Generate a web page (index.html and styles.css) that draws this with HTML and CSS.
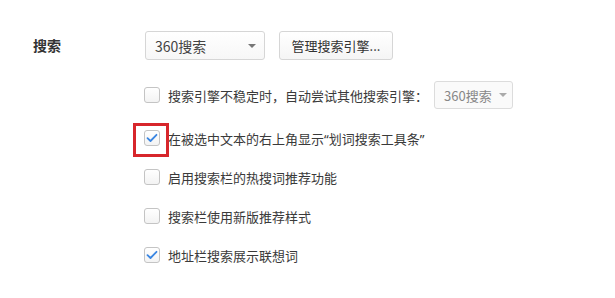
FILE: index.html
```html
<!DOCTYPE html>
<html lang="zh-CN">
  <head>
    <meta charset="UTF-8" />
    <title>搜索设置</title>
    <link rel="stylesheet" href="styles.css">
  </head>
  <body>
    <section class="setting">
      <div class="setting-label">搜索</div>
      <div class="setting-body">
        <div class="toolbar">
          <div class="select">
            <span>360搜索</span>
            <i class="caret"></i>
          </div>
          <button class="btn">管理搜索引擎...</button>
        </div>
        <ul class="options">
          <li class="option option-first">
            <span class="checkbox"></span>
            <span class="option-text">搜索引擎不稳定时，自动尝试其他搜索引擎：</span>
            <div class="select select-small disabled">
              <span>360搜索</span>
              <i class="caret"></i>
            </div>
          </li>
          <li class="option">
            <span class="checkbox checked">
              <svg width="12" height="10" viewBox="0 0 12 10">
                <path d="M1.5 5.2L4.5 8L10.5 1.8" fill="none" stroke="#3a86e2" stroke-width="1.8" stroke-linecap="round" stroke-linejoin="round" />
              </svg>
            </span>
            <span class="option-text">在被选中文本的右上角显示<span class="latin">“</span>划词搜索工具条<span class="latin">”</span></span>
            <span class="highlight"></span>
          </li>
          <li class="option">
            <span class="checkbox"></span>
            <span class="option-text">启用搜索栏的热搜词推荐功能</span>
          </li>
          <li class="option">
            <span class="checkbox"></span>
            <span class="option-text">搜索栏使用新版推荐样式</span>
          </li>
          <li class="option">
            <span class="checkbox checked">
              <svg width="12" height="10" viewBox="0 0 12 10">
                <path d="M1.5 5.2L4.5 8L10.5 1.8" fill="none" stroke="#3a86e2" stroke-width="1.8" stroke-linecap="round" stroke-linejoin="round" />
              </svg>
            </span>
            <span class="option-text">地址栏搜索展示联想词</span>
          </li>
        </ul>
      </div>
    </section>
  </body>
</html>
```

FILE: styles.css
```css
body {
  margin: 0;
  background: #fff;
  font-family: "Noto Sans CJK SC", "Noto Sans", sans-serif;
  font-size: 13px;
  color: #333;
}

.latin {
  font-family: "Noto Sans", sans-serif;
}

.setting {
  display: flex;
  padding: 31px 0 0 33px;
}

.setting-label {
  width: 112px;
  height: 29px;
  line-height: 29px;
  font-size: 14px;
  font-weight: bold;
  color: #333;
}

.setting-body {
  display: flex;
  flex-direction: column;
}

.toolbar {
  display: flex;
  gap: 14px;
}

.select {
  display: flex;
  align-items: center;
  justify-content: space-between;
  box-sizing: border-box;
  width: 120px;
  height: 29px;
  padding: 0 8px 0 9px;
  border: 1px solid #d6d6d6;
  border-radius: 3px;
  background: linear-gradient(#fff, #f7f7f7);
  color: #444;
  font-size: 14px;
}

.caret {
  width: 0;
  height: 0;
  border-left: 4px solid transparent;
  border-right: 4px solid transparent;
  border-top: 4px solid #777;
}

.btn {
  box-sizing: border-box;
  width: 114px;
  height: 29px;
  padding: 0;
  border: 1px solid #d6d6d6;
  border-radius: 3px;
  background: linear-gradient(#fff, #f5f5f5);
  font-family: inherit;
  font-size: 13px;
  color: #333;
}

.options {
  list-style: none;
  margin: 21px 0 0;
  padding: 0;
  display: flex;
  flex-direction: column;
  gap: 11px;
}

.option {
  position: relative;
  display: flex;
  align-items: center;
  height: 28px;
  margin-left: -1px;
}

.option-first {
  margin-bottom: 4px;
}

.checkbox {
  display: flex;
  align-items: center;
  justify-content: center;
  box-sizing: border-box;
  width: 16px;
  height: 16px;
  margin-right: 8px;
  border: 1px solid #c4c4c4;
  border-radius: 3px;
  background: linear-gradient(#fff, #f3f3f3);
}

.option-text {
  color: #3a3a3a;
}

.select-small {
  width: 79px;
  height: 28px;
  margin-left: 6px;
  padding: 0 5px 0 9px;
  font-size: 13px;
}

.select.disabled {
  color: #888;
  background: #fafafa;
  border-color: #dcdcdc;
}

.select.disabled .caret {
  border-top-color: #aaa;
}

.highlight {
  position: absolute;
  left: -11px;
  top: -1px;
  width: 30px;
  height: 28px;
  border: 3px solid #d7262b;
}
```
